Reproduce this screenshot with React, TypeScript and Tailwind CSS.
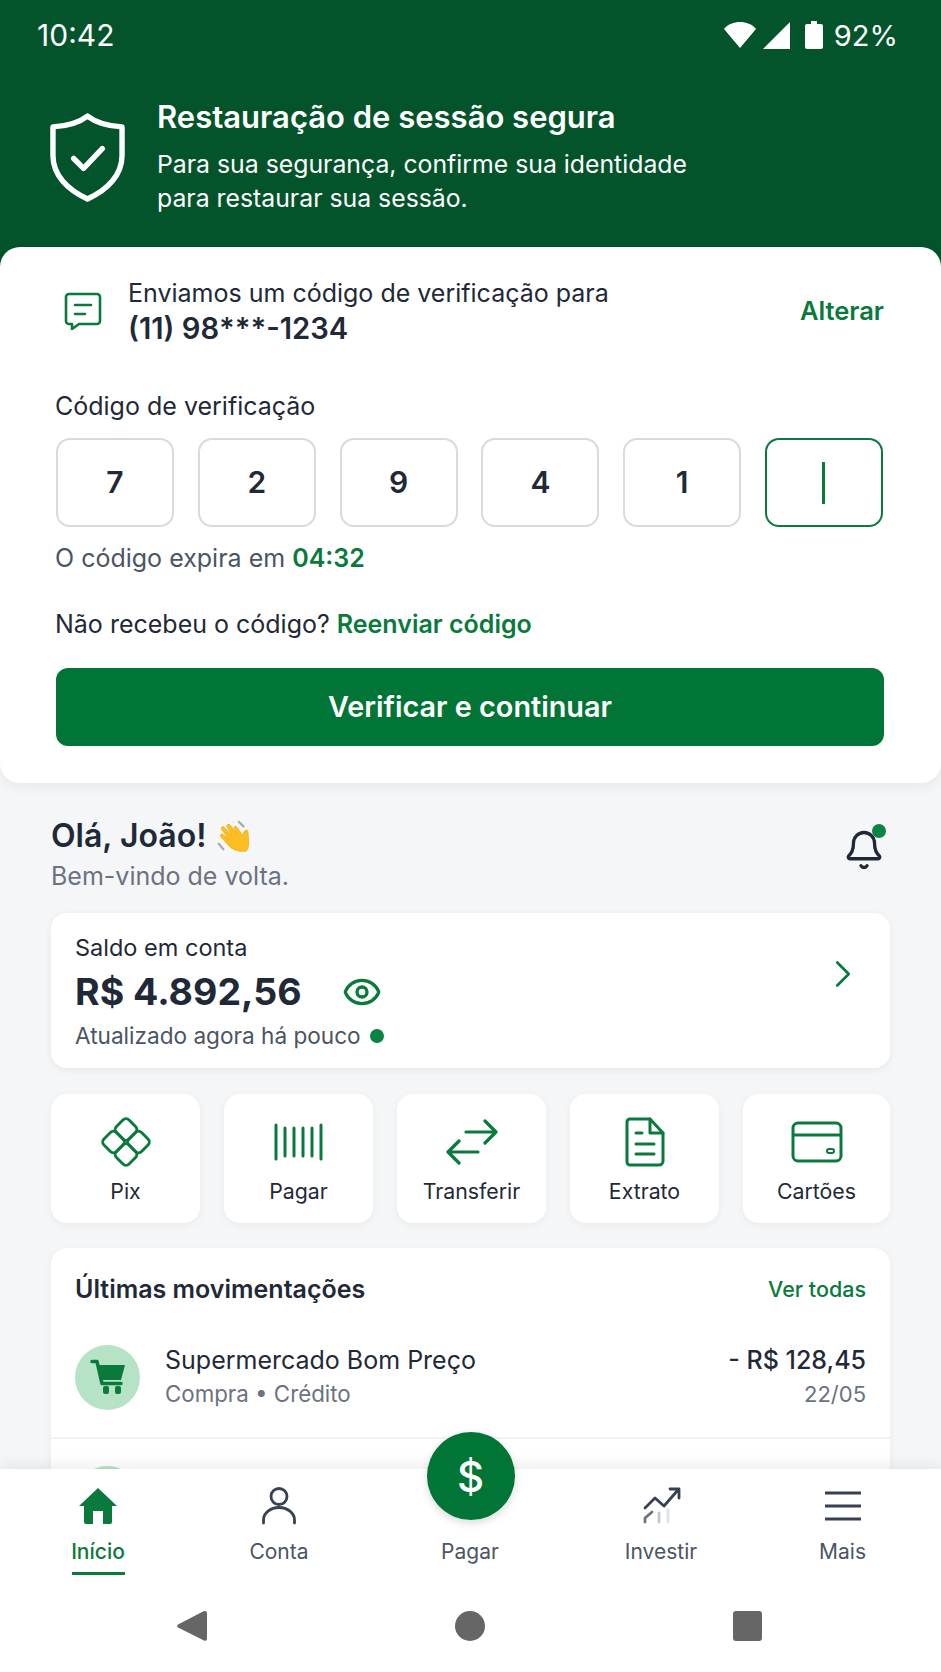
import { ChevronRight, Eye, Bell } from "lucide-react"

const otp = ["7", "2", "9", "4", "1"]

function WaveHand() {
  return (
    <svg viewBox="0 0 36 36" className="w-[33px] h-[33px]">
      <path d="M25 2l5 5M3 26l5 6" stroke="#a8adb5" strokeWidth="2.5" strokeLinecap="round" />
      <path d="M31 34c-7 1-14-2-18-7l-8-9c-1-2 1-4 3-2l6 5-8-11c-1-2 2-4 3-2l8 9-5-10c-1-2 2-3 3-2l8 10-3-6c-1-2 2-3 3-1l6 9c1-3 2-6 4-6s2 2 2 4c0 5 2 10 0 15-1 3-2 5-4 4z" fill="#fbbf24" stroke="#f5a70b" strokeWidth="0.8" />
    </svg>
  )
}

const pixIcon = (
  <svg viewBox="0 0 52 52" className="w-[50px] h-[50px]" fill="none" stroke="#0a7a3c" strokeWidth="3">
    <rect x="16.75" y="3.75" width="18.5" height="18.5" rx="4.5" transform="rotate(45 26 13)" />
    <rect x="16.75" y="29.75" width="18.5" height="18.5" rx="4.5" transform="rotate(45 26 39)" />
    <rect x="3.75" y="16.75" width="18.5" height="18.5" rx="4.5" transform="rotate(45 13 26)" />
    <rect x="29.75" y="16.75" width="18.5" height="18.5" rx="4.5" transform="rotate(45 39 26)" />
  </svg>
)

const barcodeIcon = (
  <svg viewBox="0 0 50 38" className="w-[50px] h-[38px]" fill="none" stroke="#0a7a3c" strokeLinecap="round">
    <path d="M2 2v34M47 2v34" strokeWidth="3" />
    <path d="M11 5v28M20 5v28M29 5v28M38 5v28" strokeWidth="3" />
  </svg>
)

const transferIcon = (
  <svg viewBox="0 0 52 46" className="w-[52px] h-[46px]" fill="none" stroke="#0a7a3c" strokeWidth="3.2" strokeLinecap="round" strokeLinejoin="round">
    <path d="M20 13h30M39 2l11 11-11 11" />
    <path d="M32 33H2M13 22L2 33l11 11" />
  </svg>
)

const fileIcon = (
  <svg viewBox="0 0 40 50" className="w-[40px] h-[50px]" fill="none" stroke="#0a7a3c" strokeWidth="3" strokeLinecap="round" strokeLinejoin="round">
    <path d="M5 2h20l13 14v28a4 4 0 0 1-4 4H5a3 3 0 0 1-3-3V5a3 3 0 0 1 3-3z" />
    <path d="M25 2v14h13M11 16h6M11 27h18M11 37h18" />
  </svg>
)

const cardIcon = (
  <svg viewBox="0 0 52 42" className="w-[52px] h-[42px]" fill="none" stroke="#0a7a3c" strokeWidth="3" strokeLinejoin="round">
    <rect x="2" y="2" width="48" height="38" rx="5" />
    <path d="M2 14h48" />
    <rect x="36" y="28" width="7" height="4" rx="2" strokeWidth="2" />
  </svg>
)

const actions = [
  { label: "Pix", icon: pixIcon },
  { label: "Pagar", icon: barcodeIcon },
  { label: "Transferir", icon: transferIcon },
  { label: "Extrato", icon: fileIcon },
  { label: "Cartões", icon: cardIcon },
]

export default function App() {
  return (
    <div className="w-[941px] h-[1672px] flex flex-col overflow-hidden relative bg-[#f5f6f8] font-['Inter',sans-serif] text-[#1f2937]">
      <div className="bg-[#03532b] h-[280px] shrink-0 -mb-[33px] text-white px-[37px]">
        <div className="flex items-center justify-between h-[70px] pr-[6px]">
          <span className="text-[30px] leading-none">10:42</span>
          <div className="flex items-center">
            <svg viewBox="0 0 32 26" className="w-[32px] h-[26px]" fill="white">
              <path d="M0 7C4 2 10 0 16 0s12 2 16 7L16 26z" />
            </svg>
            <svg viewBox="0 0 27 27" className="w-[27px] h-[27px] ml-[7px]" fill="white">
              <path d="M27 0v27H0z" />
            </svg>
            <svg viewBox="0 0 18 28" className="w-[18px] h-[28px] ml-[15px]" fill="white">
              <path d="M6 0h6v3h4a2 2 0 0 1 2 2v21a2 2 0 0 1-2 2H2a2 2 0 0 1-2-2V5a2 2 0 0 1 2-2h4z" />
            </svg>
            <span className="text-[29px] leading-none ml-[11px]">92%</span>
          </div>
        </div>
        <div className="flex items-start gap-[32px] pl-[13px] pt-[29px]">
          <svg viewBox="0 0 76 90" className="w-[75px] h-[89px] shrink-0 mt-[14px]" fill="none" stroke="white" strokeWidth="5.5" strokeLinejoin="round" strokeLinecap="round">
            <path d="M38 3c9 7 20 10 35 11v29c0 20-15 35-35 44C18 78 3 63 3 43V14c15-1 26-4 35-11z" />
            <path d="M24 46l10 10 19-20" />
          </svg>
          <div>
            <h1 className="text-[31px] leading-[36px] font-semibold">Restauração de sessão segura</h1>
            <p className="text-[24.8px] leading-[34px] mt-[12px]">
              Para sua segurança, confirme sua identidade
              <br />
              para restaurar sua sessão.
            </p>
          </div>
        </div>
      </div>

      <section className="bg-white rounded-[20px] h-[536px] shrink-0 shadow-[0_4px_12px_rgba(0,0,0,0.06)] px-[55px] relative">
        <div className="flex items-center justify-between h-[128px] pr-[2px]">
          <div className="flex items-center gap-[26px] pl-[9px]">
            <svg viewBox="0 0 38 38" className="w-[38px] h-[38px]" fill="none" stroke="#0a7a3c" strokeWidth="2.6" strokeLinecap="round" strokeLinejoin="round">
              <path d="M5 2h28a3 3 0 0 1 3 3v24a3 3 0 0 1-3 3H15l-7 5v-5H5a3 3 0 0 1-3-3V5a3 3 0 0 1 3-3z" />
              <path d="M11 13h16M11 22h10" />
            </svg>
            <div>
              <p className="text-[25px] leading-[35px]">Enviamos um código de verificação para</p>
              <p className="text-[29.2px] leading-[35px] font-semibold">(11) 98***-1234</p>
            </div>
          </div>
          <span className="text-[25.5px] font-semibold text-[#0a7a3c] mt-[1px]">Alterar</span>
        </div>

        <p className="text-[25px] leading-[34px] mt-[14px]">Código de verificação</p>
        <div className="flex justify-between mt-[15px] pl-[1px] pr-[3px]">
          {otp.map((d, i) => (
            <div key={i} className="w-[118px] h-[89px] rounded-[14px] border-2 border-[#d8dadf] flex items-center justify-center text-[30px] font-semibold">
              {d}
            </div>
          ))}
          <div className="w-[118px] h-[89px] rounded-[14px] border-2 border-[#0a7a3c] flex items-center justify-center">
            <div className="w-[3px] h-[42px] bg-[#0a7a3c]" />
          </div>
        </div>

        <p className="text-[25px] leading-[34px] mt-[14px] text-[#4b5563]">
          O código expira em <span className="font-semibold text-[#0a7a3c]">04:32</span>
        </p>
        <p className="text-[25px] leading-[34px] mt-[32px]">
          Não recebeu o código? <span className="font-semibold text-[#0a7a3c]">Reenviar código</span>
        </p>
        <button className="w-[828px] h-[78px] ml-[1px] mt-[27px] rounded-[12px] bg-[#017536] text-white text-[28.8px] font-semibold">
          Verificar e continuar
        </button>
      </section>

      <main className="flex-1 min-h-0 overflow-hidden px-[51px]">
        <div className="flex justify-between mt-[33px]">
          <div>
            <div className="flex items-center gap-[10px]">
              <h2 className="text-[32px] leading-[40px] font-semibold">Olá, João!</h2>
              <WaveHand />
            </div>
            <p className="text-[25px] leading-[36px] mt-[2px] text-[#6b7280]">Bem-vindo de volta.</p>
          </div>
          <div className="relative mt-[12px] mr-[3px] w-[44px] h-[44px]">
            <Bell className="w-[42px] h-[44px]" strokeWidth={1.9} color="#1f2937" />
            <span className="absolute -top-[4px] right-[1px] w-[14px] h-[14px] rounded-full bg-[#0a8443]" />
          </div>
        </div>

        <div className="bg-white rounded-[16px] h-[155px] mt-[19px] shadow-[0_2px_8px_rgba(0,0,0,0.06)] pl-[24px] pr-[24px] pt-[20px] flex justify-between">
          <div>
            <p className="text-[23.5px] leading-[30px]">Saldo em conta</p>
            <div className="flex items-center gap-[40px] mt-[5px]">
              <span className="text-[37.5px] leading-[48px] font-bold">R$ 4.892,56</span>
              <Eye className="w-[40px] h-[40px]" strokeWidth={2} color="#0a7a3c" />
            </div>
            <div className="flex items-center gap-[9px] mt-[5px]">
              <span className="text-[22.6px] leading-[30px] text-[#4b5563]">Atualizado agora há pouco</span>
              <span className="w-[14px] h-[14px] rounded-full bg-[#0a8443]" />
            </div>
          </div>
          <ChevronRight className="w-[46px] h-[46px] mt-[18px]" strokeWidth={1.4} color="#0a7a3c" />
        </div>

        <div className="grid grid-cols-[149px_149px_149px_149px_147px] gap-[24px] mt-[26px]">
          {actions.map((a) => (
            <div key={a.label} className="h-[129px] bg-white rounded-[16px] shadow-[0_2px_8px_rgba(0,0,0,0.05)] flex flex-col items-center">
              <div className="h-[58px] mt-[19px] flex items-center justify-center">{a.icon}</div>
              <span className="text-[21.3px] leading-[28px] mt-[6px]">{a.label}</span>
            </div>
          ))}
        </div>

        <div className="bg-white rounded-[16px] mt-[25px] h-[300px] shadow-[0_2px_8px_rgba(0,0,0,0.05)]">
          <div className="flex items-center justify-between px-[24px] pt-[23px]">
            <span className="text-[25px] leading-[36px] font-semibold">Últimas movimentações</span>
            <span className="text-[21.5px] font-medium text-[#0a7a3c]">Ver todas</span>
          </div>
          <div className="flex items-center justify-between px-[24px] mt-[36px] pb-[26px] border-b-2 border-[#f3f4f6]">
            <div className="flex items-center gap-[25px]">
              <div className="w-[65px] h-[65px] rounded-full bg-[#b6e2c6] flex items-center justify-center">
                <svg viewBox="0 0 36 36" className="w-[36px] h-[36px]" fill="#0a7a3c">
                  <path d="M2 2.5h5l5 22h19" fill="none" stroke="#0a7a3c" strokeWidth="3.5" strokeLinecap="round" strokeLinejoin="round" />
                  <path d="M9 6h26l-4 15H12z" />
                  <rect x="13" y="27" width="6" height="8" rx="2" />
                  <rect x="25" y="27" width="6" height="8" rx="2" />
                </svg>
              </div>
              <div>
                <p className="text-[25px] leading-[34px]">Supermercado Bom Preço</p>
                <p className="text-[22.3px] leading-[34px] text-[#6b7280]">Compra • Crédito</p>
              </div>
            </div>
            <div className="text-right">
              <p className="text-[25px] leading-[34px] font-medium">- R$ 128,45</p>
              <p className="text-[22px] leading-[34px] text-[#6b7280]">22/05</p>
            </div>
          </div>
          <div className="w-[65px] h-[65px] rounded-full bg-[#b6e2c6] ml-[24px] mt-[27px]" />
        </div>
      </main>

      <nav className="bg-white h-[203px] shrink-0 relative shadow-[0_-4px_14px_rgba(0,0,0,0.07)]">
        <div className="absolute left-1/2 -translate-x-1/2 -top-[37px] w-[88px] h-[88px] rounded-full bg-[#017536] flex items-center justify-center text-white text-[42px] font-medium shadow-[0_3px_8px_rgba(0,0,0,0.15)]">
          $
        </div>
        <div className="grid grid-cols-[196px_166px_216px_166px_197px] pt-[18px]">
          <div className="flex flex-col items-center">
            <svg viewBox="0 0 40 38" className="w-[40px] h-[38px]" fill="#0a7a3c">
              <path d="M20 1l19 18h-5v16a2 2 0 0 1-2 2h-7V24h-10v13H8a2 2 0 0 1-2-2V19H1z" />
            </svg>
            <span className="text-[21px] leading-[28px] mt-[13px] font-medium text-[#0a7a3c]">Início</span>
            <span className="w-[53px] h-[2.5px] bg-[#0a7a3c] mt-[6px]" />
          </div>
          <div className="flex flex-col items-center">
            <svg viewBox="0 0 36 38" className="w-[36px] h-[38px]" fill="none" stroke="#374151" strokeWidth="2.8" strokeLinecap="round">
              <circle cx="18" cy="9.5" r="8" />
              <path d="M2.5 36v-3a15.5 12.5 0 0 1 31 0v3" />
            </svg>
            <span className="text-[21px] leading-[28px] mt-[13px] text-[#4b5563]">Conta</span>
          </div>
          <div className="flex flex-col items-center pt-[51px]">
            <span className="text-[21px] leading-[28px] text-[#4b5563]">Pagar</span>
          </div>
          <div className="flex flex-col items-center">
            <svg viewBox="0 0 40 38" className="w-[40px] h-[38px]" fill="none" stroke="#374151" strokeWidth="2.8" strokeLinecap="round" strokeLinejoin="round">
              <path d="M4 21l10-10 9 8L37 3M29 2h9v9" />
              <path d="M4 35v-4l7-6" stroke="#6b7280" />
              <path d="M18 26v9" stroke="#c4c8ce" />
              <path d="M27 23v12" stroke="#e0e2e6" />
            </svg>
            <span className="text-[21px] leading-[28px] mt-[13px] text-[#4b5563]">Investir</span>
          </div>
          <div className="flex flex-col items-center">
            <svg viewBox="0 0 36 38" className="w-[36px] h-[38px]" fill="none" stroke="#374151" strokeWidth="3">
              <path d="M0 6h36M0 19h36M0 32h36" />
            </svg>
            <span className="text-[21px] leading-[28px] mt-[13px] text-[#4b5563]">Mais</span>
          </div>
        </div>
        <div className="absolute bottom-[30px] left-0 right-0 flex items-center h-[32px]">
          <div className="flex items-center justify-between w-full pl-[177px] pr-[179px]">
            <svg viewBox="0 0 30 32" className="w-[30px] h-[32px]" fill="#666">
              <path d="M28 1a2 2 0 0 1 2 2v26a2 2 0 0 1-3 1.5L1 17.5a2 2 0 0 1 0-3L27 1z" />
            </svg>
            <span className="w-[30px] h-[30px] rounded-full bg-[#666]" />
            <span className="w-[29px] h-[30px] rounded-[3px] bg-[#666]" />
          </div>
        </div>
      </nav>
    </div>
  )
}
